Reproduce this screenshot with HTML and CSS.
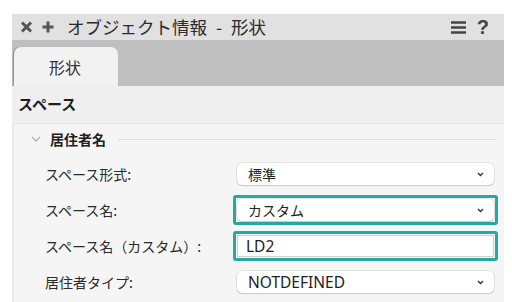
FILE: index.html
```html
<!DOCTYPE html>
<html lang="ja">
<head>
<meta charset="utf-8">
<link rel="stylesheet" href="styles.css">
</head>
<body>
<div class="panel">
  <div class="titlebar">
    <svg class="ico ico-x" width="13" height="12" viewBox="0 0 13 12"><path d="M2 1.5 L11 10.5 M11 1.5 L2 10.5" stroke="#555" stroke-width="3" stroke-linecap="butt"/></svg>
    <svg class="ico ico-plus" width="12" height="12" viewBox="0 0 12 12"><path d="M6 0.5 V11.5 M0.5 6 H11.5" stroke="#555" stroke-width="3"/></svg>
    <span class="title">オブジェクト情報 - 形状</span>
    <svg class="ico ico-menu" width="15" height="13" viewBox="0 0 15 13"><path d="M0 1.5 H15 M0 6.5 H15 M0 11.5 H15" stroke="#444" stroke-width="2.6"/></svg>
    <span class="help">?</span>
  </div>
  <div class="tabbar">
    <div class="tab">形状</div>
  </div>
  <div class="content">
    <div class="section-head">スペース</div>
    <div class="group">
      <div class="group-head">
        <svg class="chev" width="10" height="7" viewBox="0 0 10 7"><path d="M1 1 L5 5 L9 1" fill="none" stroke="#b5b5b5" stroke-width="1.5"/></svg>
        <span class="group-title">居住者名</span>
        <span class="group-line"></span>
      </div>
      <div class="rows">
        <div class="row">
          <span class="label">スペース形式:</span>
          <div class="frame">
            <div class="select"><span class="val">標準</span><svg class="caret" width="7" height="5" viewBox="0 0 7 5"><path d="M1 1 L3.5 3.5 L6 1" fill="none" stroke="#333" stroke-width="1.4"/></svg></div>
          </div>
        </div>
        <div class="row">
          <span class="label">スペース名:</span>
          <div class="frame focus">
            <div class="select"><span class="val">カスタム</span><svg class="caret" width="7" height="5" viewBox="0 0 7 5"><path d="M1 1 L3.5 3.5 L6 1" fill="none" stroke="#333" stroke-width="1.4"/></svg></div>
          </div>
        </div>
        <div class="row">
          <span class="label">スペース名（カスタム）:</span>
          <div class="frame focus">
            <div class="input"><span class="val latin">LD2</span></div>
          </div>
        </div>
        <div class="row">
          <span class="label">居住者タイプ:</span>
          <div class="frame">
            <div class="select"><span class="val latin">NOTDEFINED</span><svg class="caret" width="7" height="5" viewBox="0 0 7 5"><path d="M1 1 L3.5 3.5 L6 1" fill="none" stroke="#333" stroke-width="1.4"/></svg></div>
          </div>
        </div>
      </div>
    </div>
  </div>
</div>
</body>
</html>
```
FILE: styles.css
```css
* { box-sizing: border-box; }
html, body { margin: 0; padding: 0; background: #ffffff; }
body {
  font-family: "Noto Sans CJK JP", "Noto Sans", sans-serif;
  color: #222;
  width: 512px;
  height: 302px;
  overflow: hidden;
}
.panel {
  margin: 14px 0 0 12px;
  width: 492px;
  height: 288px;
  display: flex;
  flex-direction: column;
}
.titlebar {
  height: 26px;
  background: #e1e1e1;
  display: flex;
  align-items: center;
  padding-left: 8px;
  padding-right: 15px;
}
.ico-x { margin-right: 9px; }
.ico-plus { margin-right: 13px; }
.title {
  font-size: 17.5px;
  word-spacing: 5px;
  color: #2a2a2a;
  flex: 1;
  line-height: 26px;
}
.ico-menu { margin-right: 11px; }
.help {
  font-family: "Liberation Sans", sans-serif;
  font-weight: bold;
  font-size: 20px;
  color: #444;
  line-height: 26px;
}
.tabbar {
  height: 46px;
  background: #bfbfbf;
  display: flex;
  align-items: flex-end;
  padding-left: 2px;
}
.tab {
  width: 104px;
  height: 39px;
  background: #f2f2f2;
  border-radius: 7px 7px 0 0;
  box-shadow: -1px 0 1px rgba(0,0,0,0.25);
  display: flex;
  align-items: center;
  justify-content: center;
  font-size: 16px;
  color: #333;
  padding-right: 2px;
}
.content {
  flex: 1;
  background: #efefef;
  display: flex;
  flex-direction: column;
}
.section-head {
  height: 37px;
  display: flex;
  align-items: center;
  padding-left: 6px;
  padding-bottom: 2px;
  font-size: 15px;
  font-weight: bold;
  color: #1e1e1e;
}
.group {
  flex: 1;
  margin-left: 1px;
  background: #f5f5f5;
  border-top: 1px solid #e3e3e3;
  border-left: 1px solid #e6e6e6;
}
.group-head {
  height: 30px;
  display: flex;
  align-items: center;
  padding-left: 17px;
  padding-right: 8px;
}
.chev { margin-right: 9px; }
.group-title {
  font-size: 14px;
  font-weight: bold;
  color: #222;
}
.group-line {
  flex: 1;
  height: 1px;
  background: #dcdcdc;
  margin-left: 12px;
}
.rows {
  display: flex;
  flex-direction: column;
  gap: 6px;
  padding-top: 5px;
}
.row {
  display: grid;
  grid-template-columns: 219px 265px;
  align-items: center;
  height: 30px;
}
.label {
  padding-left: 31px;
  font-size: 14px;
  color: #2a2a2a;
}
.frame {
  height: 30px;
  padding: 1px;
  border: 3px solid transparent;
  border-radius: 3px;
}
.frame.focus {
  border-color: #27a99f;
}
.select, .input {
  height: 22px;
  background: #ffffff;
  display: flex;
  align-items: center;
  padding-left: 11px;
  padding-right: 10px;
}
.select {
  border-radius: 5px;
  box-shadow: 0 0 0 0.5px rgba(0,0,0,0.14), 0 1px 1.5px rgba(0,0,0,0.12);
}
.input {
  border: 1px solid #d0d0d0;
  padding-left: 8px;
}
.val {
  flex: 1;
  font-size: 14px;
  color: #222;
}
.val.latin {
  font-family: "Noto Sans", sans-serif;
  font-size: 15.5px;
}
.caret { flex: none; }
```
